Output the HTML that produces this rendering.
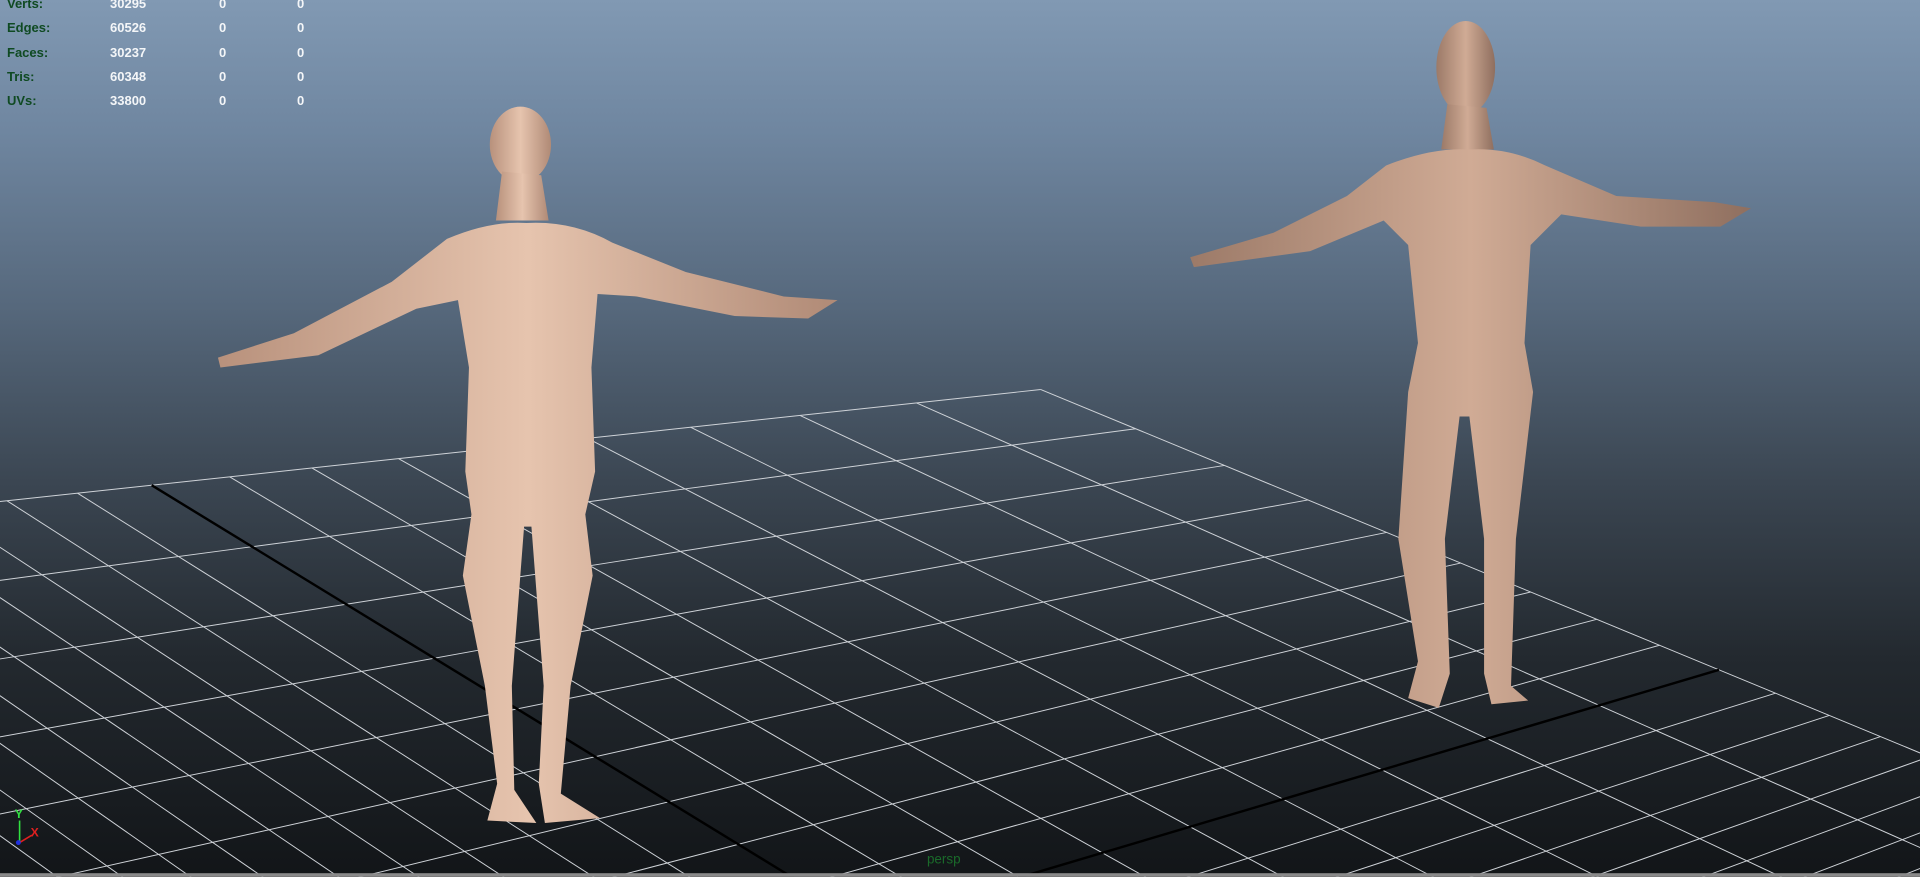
<!DOCTYPE html>
<html><head><meta charset="utf-8"><style>
html,body{margin:0;padding:0;width:1920px;height:877px;overflow:hidden;background:#222;position:relative;}
#bg{position:absolute;left:0;top:0;width:1920px;height:877px;background:linear-gradient(#8199b3 0%,#6f86a0 15%,#56687c 35%,#3b4652 55%,#23292f 75%,#121518 100%);}
svg{position:absolute;left:0;top:0;}
.st{position:absolute;font:bold 13px "Liberation Sans",sans-serif;}
.l{color:#0f4a22;left:7px;}
.n{color:#f4f6f8;}
</style></head><body>
<div id="bg"></div>
<svg id="g" width="1920" height="877" viewBox="0 0 1568 716"></svg>
<svg width="1920" height="877" viewBox="0 0 1568 716">
<defs>
<linearGradient id="sk" x1="0" x2="1"><stop offset="0" stop-color="#b8917c"/><stop offset=".5" stop-color="#e6c4ae"/><stop offset="1" stop-color="#b08a76"/></linearGradient>
<linearGradient id="sk2" x1="0" x2="1"><stop offset="0" stop-color="#9c7a68"/><stop offset=".5" stop-color="#d0ab95"/><stop offset="1" stop-color="#8f6f5f"/></linearGradient>
</defs>
<g fill="url(#sk)">
<ellipse cx="425" cy="118" rx="25" ry="31"/>
<path d="M410 140 L442 143 L448 180 L405 180Z"/>
<path d="M365 195 Q400 180 430 182 Q468 180 500 198 L560 222 L640 242 L684 245 L660 260 L600 258 L520 242 L488 240 L483 300 L486 385 L478 420 L484 470 L466 560 L458 648 L490 668 L445 672 L440 640 L444 560 L434 430 L428 430 L418 560 L420 645 L438 672 L398 670 L406 640 L396 560 L378 470 L385 420 L380 385 L383 300 L374 245 L340 252 L260 290 L180 300 L178 292 L240 272 L320 230Z"/>
</g>
<g fill="url(#sk2)">
<ellipse cx="1197" cy="55" rx="24" ry="38"/>
<path d="M1182 85 L1214 88 L1220 122 L1177 122Z"/>
<path d="M1132 135 Q1170 120 1200 122 Q1232 120 1262 135 L1320 160 L1400 165 L1430 170 L1405 185 L1340 185 L1275 175 L1250 200 L1245 280 L1252 320 L1238 440 L1234 560 L1248 572 L1218 575 L1212 550 L1212 440 L1200 340 L1192 340 L1180 440 L1184 550 L1175 578 L1150 570 L1158 540 L1142 440 L1150 320 L1158 280 L1150 200 L1130 180 L1070 205 L975 218 L972 210 L1040 190 L1100 160Z"/>
</g>
<g font-family="Liberation Sans,sans-serif" font-size="10" font-weight="bold">
<text x="12" y="668" fill="#30e040">Y</text><text x="25" y="683" fill="#e02020">X</text>
</g>
<line x1="16" y1="670" x2="16" y2="688" stroke="#30e040" stroke-width="1.3"/>
<line x1="16" y1="688" x2="26" y2="682" stroke="#e02020" stroke-width="1.3"/>
<circle cx="15" cy="688" r="2" fill="#2030e0"/>
<text x="757" y="705" fill="#1a6a2a" font-family="Liberation Sans,sans-serif" font-size="11">persp</text>
<rect x="0" y="713" width="1568" height="3" fill="#8a8a8a"/>
</svg>
<div class="st l" style="top:-4px">Verts:</div><div class="st l" style="top:20px">Edges:</div><div class="st l" style="top:45px">Faces:</div><div class="st l" style="top:69px">Tris:</div><div class="st l" style="top:93px">UVs:</div>
<div class="st n" style="left:110px;top:-4px">30295</div><div class="st n" style="left:110px;top:20px">60526</div><div class="st n" style="left:110px;top:45px">30237</div><div class="st n" style="left:110px;top:69px">60348</div><div class="st n" style="left:110px;top:93px">33800</div>
<div class="st n" style="left:219px;top:-4px">0</div><div class="st n" style="left:219px;top:20px">0</div><div class="st n" style="left:219px;top:45px">0</div><div class="st n" style="left:219px;top:69px">0</div><div class="st n" style="left:219px;top:93px">0</div>
<div class="st n" style="left:297px;top:-4px">0</div><div class="st n" style="left:297px;top:20px">0</div><div class="st n" style="left:297px;top:45px">0</div><div class="st n" style="left:297px;top:69px">0</div><div class="st n" style="left:297px;top:93px">0</div>
<script>
(function(){
var P=[[850,318],[1750,690],[650,1150],[-330,445]];
function H(u,v){
 var w0=(1-u)*(1-v),w1=u*(1-v),w2=u*v,w3=(1-u)*v;
 var wt=[1,1.6,2.6,1.6];
 var a=[w0*wt[0],w1*wt[1],w2*wt[2],w3*wt[3]],s=a[0]+a[1]+a[2]+a[3];
 var x=0,y=0;for(var i=0;i<4;i++){x+=a[i]*P[i][0];y+=a[i]*P[i][1];}
 return [x/s,y/s];}
var g=document.getElementById('g'),h='',N=18;
for(var i=0;i<=N;i++){var t=i/N;
 var a=H(t,0),b=H(t,1),c=H(0,t),d=H(1,t);
 var col=(i==9)?'#000':'#cfd3d8',sw=(i==9)?2:0.8;
 h+='<line x1="'+a[0]+'" y1="'+a[1]+'" x2="'+b[0]+'" y2="'+b[1]+'" stroke="'+col+'" stroke-width="'+sw+'"/>';
 h+='<line x1="'+c[0]+'" y1="'+c[1]+'" x2="'+d[0]+'" y2="'+d[1]+'" stroke="'+col+'" stroke-width="'+sw+'"/>';}
g.innerHTML=h;})();
</script>
</body></html>
